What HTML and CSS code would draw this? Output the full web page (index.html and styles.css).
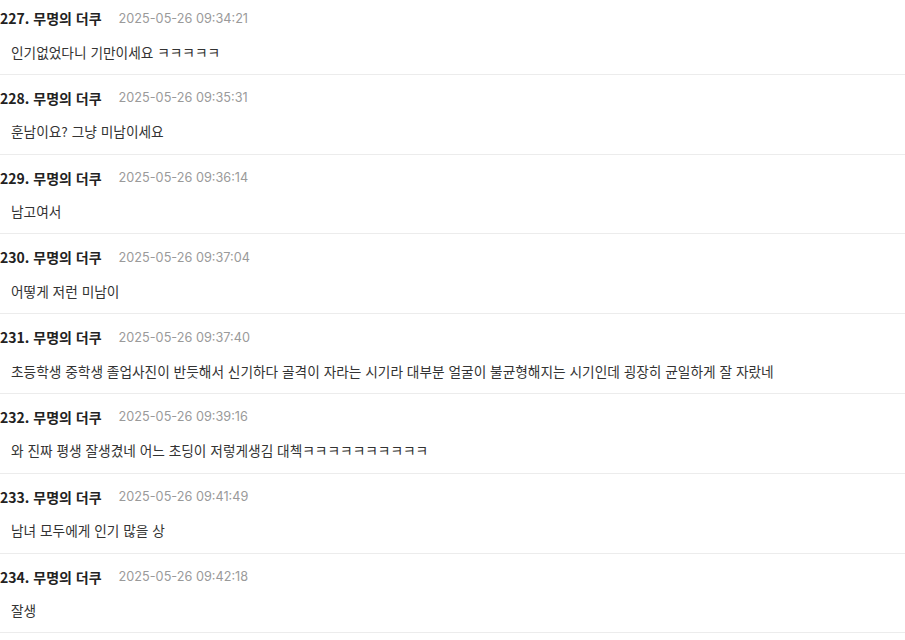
FILE: index.html
```html
<!DOCTYPE html>
<html lang="ko">
<head>
<meta charset="utf-8">
<link rel="stylesheet" href="styles.css">
</head>
<body>
<ul class="comments">
  <li class="comment">
    <div class="meta"><span class="name">227. 무명의 더쿠</span><span class="date">2025-05-26 09:34:21</span></div>
    <div class="body">인기없었다니 기만이세요 ㅋㅋㅋㅋㅋ</div>
  </li>
  <li class="comment">
    <div class="meta"><span class="name">228. 무명의 더쿠</span><span class="date">2025-05-26 09:35:31</span></div>
    <div class="body">훈남이요? 그냥 미남이세요</div>
  </li>
  <li class="comment">
    <div class="meta"><span class="name">229. 무명의 더쿠</span><span class="date">2025-05-26 09:36:14</span></div>
    <div class="body">남고여서</div>
  </li>
  <li class="comment">
    <div class="meta"><span class="name">230. 무명의 더쿠</span><span class="date">2025-05-26 09:37:04</span></div>
    <div class="body">어떻게 저런 미남이</div>
  </li>
  <li class="comment">
    <div class="meta"><span class="name">231. 무명의 더쿠</span><span class="date">2025-05-26 09:37:40</span></div>
    <div class="body">초등학생 중학생 졸업사진이 반듯해서 신기하다 골격이 자라는 시기라 대부분 얼굴이 불균형해지는 시기인데 굉장히 균일하게 잘 자랐네</div>
  </li>
  <li class="comment">
    <div class="meta"><span class="name">232. 무명의 더쿠</span><span class="date">2025-05-26 09:39:16</span></div>
    <div class="body">와 진짜 평생 잘생겼네 어느 초딩이 저렇게생김 대첵ㅋㅋㅋㅋㅋㅋㅋㅋㅋㅋ</div>
  </li>
  <li class="comment">
    <div class="meta"><span class="name">233. 무명의 더쿠</span><span class="date">2025-05-26 09:41:49</span></div>
    <div class="body">남녀 모두에게 인기 많을 상</div>
  </li>
  <li class="comment">
    <div class="meta"><span class="name">234. 무명의 더쿠</span><span class="date">2025-05-26 09:42:18</span></div>
    <div class="body">잘생</div>
  </li>
</ul>
</body>
</html>
```

FILE: styles.css
```css
html, body {
  margin: 0;
  padding: 0;
  background: #fff;
}
body {
  font-family: "Noto Sans CJK KR", "Noto Sans", sans-serif;
  color: #333;
  overflow: hidden;
}
.comments {
  list-style: none;
  margin: -5px 0 0;
  padding: 0;
}
.comment {
  padding: 13px 0 12.3px;
  border-bottom: 1px solid #ececec;
}
.meta {
  display: flex;
  align-items: center;
  height: 20px;
}
.name {
  font-size: 14px;
  font-weight: 700;
  color: #222;
}
.date {
  margin-left: 17px;
  font-size: 12.7px;
  color: #9a9a9a;
  font-family: "Inter", "Noto Sans", sans-serif;
}
.body {
  margin-top: 13.5px;
  padding-left: 11px;
  font-size: 13.7px;
  line-height: 20px;
  color: #333;
}
```
